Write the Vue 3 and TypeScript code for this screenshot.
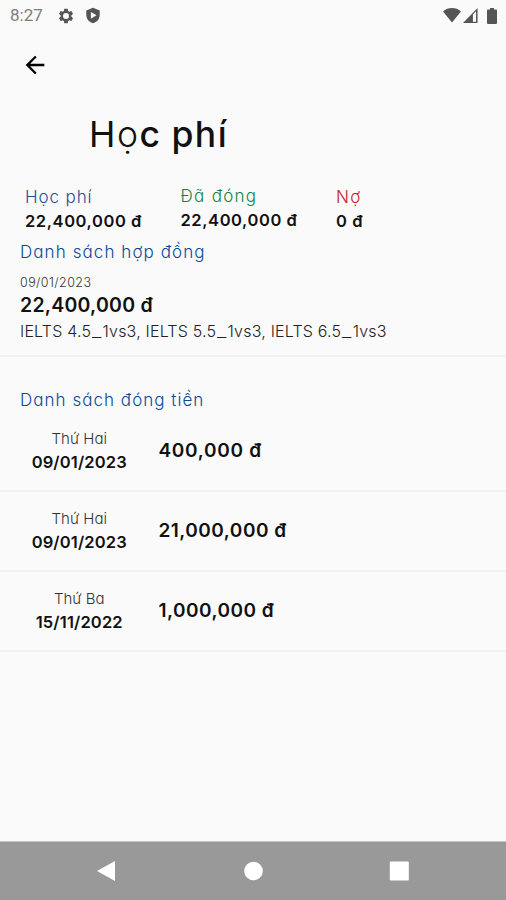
<script setup lang="ts">
interface Payment {
  day: string
  date: string
  amount: string
  kind: string
}

const courses: string[][] = [
  ['IELTS 4.5', '1vs3, '],
  ['IELTS 5.5', '1vs3, '],
  ['IELTS 6.5', '1vs3'],
]
const payments: Payment[] = [
  { day: 'Thứ Hai', date: '09/01/2023', amount: '400,000 đ', kind: 'first' },
  { day: 'Thứ Hai', date: '09/01/2023', amount: '21,000,000 đ', kind: 'second' },
  { day: 'Thứ Ba', date: '15/11/2022', amount: '1,000,000 đ', kind: 'third' },
]
</script>

<template>
  <div class="screen">
    <header class="status">
      <span class="clock">8:27</span>
      <svg class="gear" viewBox="0 0 24 24"><path d="M19.14 12.94c.04-.3.06-.61.06-.94s-.02-.64-.07-.94l2.03-1.58a.49.49 0 0 0 .12-.61l-1.92-3.32a.49.49 0 0 0-.59-.22l-2.39.96a7 7 0 0 0-1.62-.94l-.36-2.54A.48.48 0 0 0 13.92 2.4h-3.84a.48.48 0 0 0-.48.41l-.36 2.54c-.59.24-1.13.57-1.62.94l-2.39-.96a.48.48 0 0 0-.59.22L2.73 8.87a.48.48 0 0 0 .12.61l2.03 1.58a6.5 6.5 0 0 0 0 1.88l-2.03 1.58a.49.49 0 0 0-.12.61l1.92 3.32c.12.22.37.29.59.22l2.39-.96c.5.38 1.03.7 1.62.94l.36 2.54c.05.24.24.41.48.41h3.84c.24 0 .44-.17.48-.41l.36-2.54a7 7 0 0 0 1.62-.94l2.39.96c.22.08.47 0 .59-.22l1.92-3.32a.48.48 0 0 0-.12-.61zM12 16a4 4 0 1 1 0-8 4 4 0 0 1 0 8z" fill-rule="evenodd" /></svg>
      <svg class="shield" viewBox="0 0 24 24"><path d="M12 1 2.5 5v6c0 5.55 4 10.74 9.5 12 5.5-1.26 9.5-6.45 9.5-12V5zM9 7l8 4.8-8 4.8z" fill-rule="evenodd" /></svg>
      <span class="grow"></span>
      <svg class="wifi" viewBox="0 0 18 15"><path d="M0 3.4C5-1.1 13-1.1 18 3.4L9 14.6z" /></svg>
      <svg class="signal" viewBox="0 0 16 16"><path d="M0 16 15.5 0v16zM10.6 7v7.6h3.3V3.5z" fill-rule="evenodd" /></svg>
      <svg class="battery" viewBox="0 0 10 16"><path d="M3 0h4v1.6h2a1 1 0 0 1 1 1V15a1 1 0 0 1-1 1H1a1 1 0 0 1-1-1V2.6a1 1 0 0 1 1-1h2z" /></svg>
    </header>

    <nav class="appbar">
      <svg viewBox="0 0 24 24"><path d="M20 11H7.83l5.59-5.59L12 4l-8 8 8 8 1.41-1.41L7.83 13H20z" /></svg>
    </nav>

    <h1 class="title"><span class="thin">H</span><span class="light">ọ</span>c phí</h1>

    <section class="summary">
      <div class="fee">
        <div class="label blue">Học phí</div>
        <div class="value">22,400,000 đ</div>
      </div>
      <div class="paid">
        <div class="label green">Đã đóng</div>
        <div class="value">22,400,000 đ</div>
      </div>
      <div class="debt">
        <div class="label red">Nợ</div>
        <div class="value">0 đ</div>
      </div>
    </section>

    <section class="contract">
      <h2 class="heading">Danh sách hợp đồng</h2>
      <div class="signed">09/01/2023</div>
      <div class="total">22,400,000 đ</div>
      <div class="courses"><template v-for="c in courses" :key="c[0]">{{ c[0] }}<span class="underscore">_</span>{{ c[1] }}</template></div>
    </section>

    <section class="payments">
      <h2 class="heading pay">Danh sách đóng tiền</h2>
      <div v-for="p in payments" :key="p.amount" class="row" :class="p.kind">
        <div class="when">
          <div class="day">{{ p.day }}</div>
          <div class="date">{{ p.date }}</div>
        </div>
        <div class="amount">{{ p.amount }}</div>
      </div>
    </section>

    <footer class="navbar">
      <svg viewBox="0 0 506 58">
        <path d="M97 29 115 19v20z" />
        <circle cx="253.5" cy="29" r="9.3" />
        <rect x="389.8" y="19.5" width="19" height="19" rx="1" />
      </svg>
    </footer>
  </div>
</template>

<style>
body {
  margin: 0;
  background: #fafafa;
}
</style>

<style scoped>
.screen {
  display: flex;
  flex-direction: column;
  width: 506px;
  height: 900px;
  overflow: hidden;
  background: #fafafa;
  color: #111;
  font-family: Inter, "Noto Sans", sans-serif;
  font-feature-settings: "cv11" 1;
}
.status {
  display: flex;
  align-items: center;
  height: 31px;
  padding: 0 9px 0 10px;
  box-sizing: border-box;
  fill: #555;
}
.clock {
  width: 48px;
  font: 400 17px/31px Roboto, sans-serif;
  color: #7d7d7d;
}
.gear { width: 18px; height: 18px; margin-left: -1px; }
.shield { width: 18px; height: 17px; margin-left: 9px; }
.grow { flex: 1; }
.wifi { width: 18px; height: 15px; }
.signal { width: 15px; height: 15px; margin-left: 2px; }
.battery { width: 10px; height: 16px; margin-left: 9px; }
.appbar {
  display: flex;
  align-items: center;
  height: 67px;
  padding-left: 21px;
}
.appbar svg { width: 28px; height: 28px; }
.title {
  margin: 0;
  padding: 13px 0 0 89px;
  height: 75px;
  font-size: 35.5px;
  line-height: 48px;
  font-weight: 450;
  letter-spacing: 1.5px;
  word-spacing: -1px;
}
.thin { font-weight: 400; }
.light { font-weight: 300; }
.summary {
  display: flex;
  height: 55px;
  margin-top: -1px;
  padding-left: 25px;
  box-sizing: border-box;
}
.fee { width: 155.5px; }
.paid { width: 155.5px; margin-top: -1px; }
.label {
  font-size: 17px;
  font-weight: 300;
  line-height: 24px;
  letter-spacing: 0.9px;
}
.paid .label { letter-spacing: 1.3px; }
.debt .label { letter-spacing: 1.4px; }
.value {
  font-size: 16.5px;
  font-weight: 600;
  line-height: 24px;
  letter-spacing: 0.58px;
}
.blue { color: #1f4b9c; }
.green { color: #128347; }
.red { color: #c8202c; }
.heading {
  margin: 0;
  font-size: 17px;
  font-weight: 300;
  line-height: 24px;
  letter-spacing: 1.08px;
  color: #0d4796;
}
.contract {
  height: 115px;
  padding-left: 20px;
  border-bottom: 2px solid #f1f1f1;
}
.signed {
  padding-top: 10px;
  font-size: 12.5px;
  font-weight: 300;
  line-height: 18px;
  letter-spacing: 0.42px;
  color: #333;
}
.total {
  font-size: 19.5px;
  font-weight: 600;
  line-height: 26px;
  letter-spacing: 0.23px;
}
.courses {
  font-size: 16px;
  font-weight: 300;
  line-height: 27px;
  letter-spacing: 0.2px;
  color: #222;
}
.underscore {
  display: inline-block;
  margin: 0 2px;
  transform: scaleX(1.3);
}
.payments { padding-top: 31px; }
.heading.pay { padding-left: 20px; letter-spacing: 1.03px; }
.row {
  display: flex;
  align-items: center;
  height: 80px;
  box-sizing: border-box;
  border-bottom: 2px solid #f1f1f1;
}
.when {
  width: 158.5px;
  padding-bottom: 2px;
  text-align: center;
}
.day {
  font-size: 15px;
  font-weight: 300;
  line-height: 24px;
  color: #333;
}
.date {
  font-size: 16.5px;
  font-weight: 600;
  line-height: 23px;
  letter-spacing: 0.15px;
}
.amount {
  padding-bottom: 1px;
  font-size: 19px;
  font-weight: 600;
  line-height: 26px;
  letter-spacing: 0.48px;
}
.first .amount { letter-spacing: 0.7px; }
.navbar {
  height: 58px;
  margin-top: auto;
  background: #999;
  border-top: 1px solid #c4c4c4;
}
.navbar svg {
  display: block;
  width: 506px;
  height: 58px;
  fill: #fff;
}
</style>
